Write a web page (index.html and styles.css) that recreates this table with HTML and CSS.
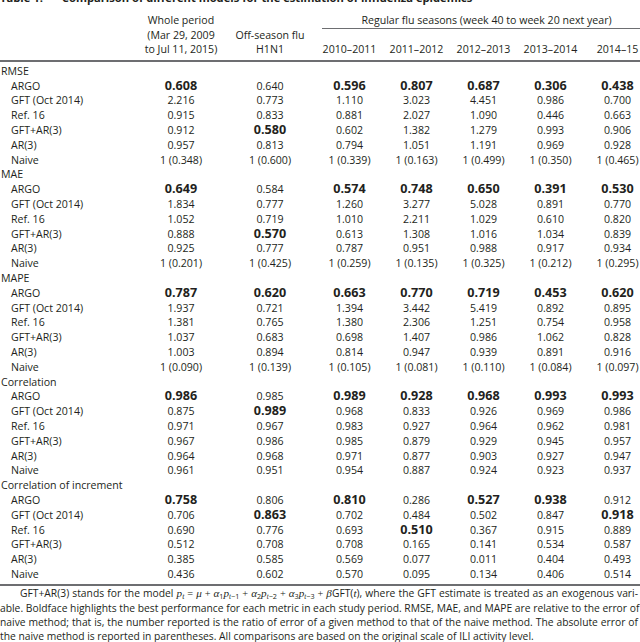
FILE: index.html
```html
<!DOCTYPE html>
<html lang="en">
<head>
<meta charset="utf-8">
<title>Table 1</title>
<link rel="stylesheet" href="styles.css">
</head>
<body>
<div class="page">
  <div class="caption"><span class="tnum">Table 1.</span>Comparison of different models for the estimation of influenza epidemics</div>
  <table class="data">
    <colgroup>
      <col class="c-label"><col class="c-whole"><col class="c-off">
      <col class="c-year"><col class="c-year"><col class="c-year"><col class="c-year"><col class="c-year">
    </colgroup>
    <thead>
      <tr class="h1">
        <th rowspan="2" class="hl"></th>
        <th rowspan="2" class="hv">Whole period<br>(Mar 29, 2009<br>to Jul 11, 2015)</th>
        <th rowspan="2" class="hv">Off-season flu<br>H1N1</th>
        <th colspan="5" class="span"><div class="span-in">Regular flu seasons (week 40 to week 20 next year)</div></th>
      </tr>
      <tr class="h2">
        <th>2010–2011</th><th>2011–2012</th><th>2012–2013</th><th>2013–2014</th><th>2014–15</th>
      </tr>
    </thead>
    <tbody>
      <tr class="grp first"><td colspan="8">RMSE</td></tr>
      <tr><td class="lab">ARGO</td><td><b>0.608</b></td><td>0.640</td><td><b>0.596</b></td><td><b>0.807</b></td><td><b>0.687</b></td><td><b>0.306</b></td><td><b>0.438</b></td></tr>
      <tr><td class="lab">GFT (Oct 2014)</td><td>2.216</td><td>0.773</td><td>1.110</td><td>3.023</td><td>4.451</td><td>0.986</td><td>0.700</td></tr>
      <tr><td class="lab">Ref. 16</td><td>0.915</td><td>0.833</td><td>0.881</td><td>2.027</td><td>1.090</td><td>0.446</td><td>0.663</td></tr>
      <tr><td class="lab">GFT+AR(3)</td><td>0.912</td><td><b>0.580</b></td><td>0.602</td><td>1.382</td><td>1.279</td><td>0.993</td><td>0.906</td></tr>
      <tr><td class="lab">AR(3)</td><td>0.957</td><td>0.813</td><td>0.794</td><td>1.051</td><td>1.191</td><td>0.969</td><td>0.928</td></tr>
      <tr><td class="lab">Naive</td><td>1 (0.348)</td><td>1 (0.600)</td><td>1 (0.339)</td><td>1 (0.163)</td><td>1 (0.499)</td><td>1 (0.350)</td><td>1 (0.465)</td></tr>

      <tr class="grp"><td colspan="8">MAE</td></tr>
      <tr><td class="lab">ARGO</td><td><b>0.649</b></td><td>0.584</td><td><b>0.574</b></td><td><b>0.748</b></td><td><b>0.650</b></td><td><b>0.391</b></td><td><b>0.530</b></td></tr>
      <tr><td class="lab">GFT (Oct 2014)</td><td>1.834</td><td>0.777</td><td>1.260</td><td>3.277</td><td>5.028</td><td>0.891</td><td>0.770</td></tr>
      <tr><td class="lab">Ref. 16</td><td>1.052</td><td>0.719</td><td>1.010</td><td>2.211</td><td>1.029</td><td>0.610</td><td>0.820</td></tr>
      <tr><td class="lab">GFT+AR(3)</td><td>0.888</td><td><b>0.570</b></td><td>0.613</td><td>1.308</td><td>1.016</td><td>1.034</td><td>0.839</td></tr>
      <tr><td class="lab">AR(3)</td><td>0.925</td><td>0.777</td><td>0.787</td><td>0.951</td><td>0.988</td><td>0.917</td><td>0.934</td></tr>
      <tr><td class="lab">Naive</td><td>1 (0.201)</td><td>1 (0.425)</td><td>1 (0.259)</td><td>1 (0.135)</td><td>1 (0.325)</td><td>1 (0.212)</td><td>1 (0.295)</td></tr>

      <tr class="grp"><td colspan="8">MAPE</td></tr>
      <tr><td class="lab">ARGO</td><td><b>0.787</b></td><td><b>0.620</b></td><td><b>0.663</b></td><td><b>0.770</b></td><td><b>0.719</b></td><td><b>0.453</b></td><td><b>0.620</b></td></tr>
      <tr><td class="lab">GFT (Oct 2014)</td><td>1.937</td><td>0.721</td><td>1.394</td><td>3.442</td><td>5.419</td><td>0.892</td><td>0.895</td></tr>
      <tr><td class="lab">Ref. 16</td><td>1.381</td><td>0.765</td><td>1.380</td><td>2.306</td><td>1.251</td><td>0.754</td><td>0.958</td></tr>
      <tr><td class="lab">GFT+AR(3)</td><td>1.037</td><td>0.683</td><td>0.698</td><td>1.407</td><td>0.986</td><td>1.062</td><td>0.828</td></tr>
      <tr><td class="lab">AR(3)</td><td>1.003</td><td>0.894</td><td>0.814</td><td>0.947</td><td>0.939</td><td>0.891</td><td>0.916</td></tr>
      <tr><td class="lab">Naive</td><td>1 (0.090)</td><td>1 (0.139)</td><td>1 (0.105)</td><td>1 (0.081)</td><td>1 (0.110)</td><td>1 (0.084)</td><td>1 (0.097)</td></tr>

      <tr class="grp"><td colspan="8">Correlation</td></tr>
      <tr><td class="lab">ARGO</td><td><b>0.986</b></td><td>0.985</td><td><b>0.989</b></td><td><b>0.928</b></td><td><b>0.968</b></td><td><b>0.993</b></td><td><b>0.993</b></td></tr>
      <tr><td class="lab">GFT (Oct 2014)</td><td>0.875</td><td><b>0.989</b></td><td>0.968</td><td>0.833</td><td>0.926</td><td>0.969</td><td>0.986</td></tr>
      <tr><td class="lab">Ref. 16</td><td>0.971</td><td>0.967</td><td>0.983</td><td>0.927</td><td>0.964</td><td>0.962</td><td>0.981</td></tr>
      <tr><td class="lab">GFT+AR(3)</td><td>0.967</td><td>0.986</td><td>0.985</td><td>0.879</td><td>0.929</td><td>0.945</td><td>0.957</td></tr>
      <tr><td class="lab">AR(3)</td><td>0.964</td><td>0.968</td><td>0.971</td><td>0.877</td><td>0.903</td><td>0.927</td><td>0.947</td></tr>
      <tr><td class="lab">Naive</td><td>0.961</td><td>0.951</td><td>0.954</td><td>0.887</td><td>0.924</td><td>0.923</td><td>0.937</td></tr>

      <tr class="grp"><td colspan="8">Correlation of increment</td></tr>
      <tr><td class="lab">ARGO</td><td><b>0.758</b></td><td>0.806</td><td><b>0.810</b></td><td>0.286</td><td><b>0.527</b></td><td><b>0.938</b></td><td>0.912</td></tr>
      <tr><td class="lab">GFT (Oct 2014)</td><td>0.706</td><td><b>0.863</b></td><td>0.702</td><td>0.484</td><td>0.502</td><td>0.847</td><td><b>0.918</b></td></tr>
      <tr><td class="lab">Ref. 16</td><td>0.690</td><td>0.776</td><td>0.693</td><td><b>0.510</b></td><td>0.367</td><td>0.915</td><td>0.889</td></tr>
      <tr><td class="lab">GFT+AR(3)</td><td>0.512</td><td>0.708</td><td>0.708</td><td>0.165</td><td>0.141</td><td>0.534</td><td>0.587</td></tr>
      <tr><td class="lab">AR(3)</td><td>0.385</td><td>0.585</td><td>0.569</td><td>0.077</td><td>0.011</td><td>0.404</td><td>0.493</td></tr>
      <tr class="last"><td class="lab">Naive</td><td>0.436</td><td>0.602</td><td>0.570</td><td>0.095</td><td>0.134</td><td>0.406</td><td>0.514</td></tr>
    </tbody>
  </table>
  <div class="note">
    <span class="ln indent">GFT+AR(3) stands for the model <i class="m">p<sub>t</sub></i><span class="op">=</span><i class="m">μ</i><span class="op">+</span><i class="m">α</i><sub>1</sub><i class="m">p</i><sub><i class="m">t</i>−1</sub><span class="op">+</span><i class="m">α</i><sub>2</sub><i class="m">p</i><sub><i class="m">t</i>−2</sub><span class="op">+</span><i class="m">α</i><sub>3</sub><i class="m">p</i><sub><i class="m">t</i>−3</sub><span class="op">+</span><i class="m">β</i>GFT(<i class="m">t</i>), where the GFT estimate is treated as an exogenous vari-</span>
    <span class="ln">able. Boldface highlights the best performance for each metric in each study period. RMSE, MAE, and MAPE are relative to the error of</span>
    <span class="ln">naive method; that is, the number reported is the ratio of error of a given method to that of the naive method. The absolute error of</span>
    <span class="ln end">the naive method is reported in parentheses. All comparisons are based on the original scale of ILI activity level.</span>
  </div>
</div>
</body>
</html>
```

FILE: styles.css
```css
html, body {
  margin: 0;
  padding: 0;
  background: #ffffff;
}

body {
  font-family: "Open Sans", "Noto Sans", "DejaVu Sans", sans-serif;
  color: #231f20;
}

.page {
  width: 640px;
  overflow: hidden;
  margin-top: -9px;
}

.caption {
  font-size: 11.2px;
  font-weight: 700;
  line-height: 14px;
  margin-bottom: 8px;
  white-space: nowrap;
}

.caption .tnum {
  margin-right: 19px;
}

.data {
  border-collapse: collapse;
  table-layout: fixed;
  width: 651px;
  font-size: 10.6px;
}

.c-label { width: 138px; }
.c-whole { width: 86px; }
.c-off { width: 92px; }
.c-year { width: 67px; }

.data th {
  font-weight: 400;
  text-align: center;
  padding: 0;
  line-height: 14.5px;
  white-space: nowrap;
}

.data th.hv {
  vertical-align: bottom;
  padding-bottom: 3px;
}

.data th.span {
  padding: 0 0 7px 6px;
}

.span-in {
  border-bottom: 1px solid #6d6e71;
}

.data .h2 th {
  padding-top: 6.5px;
  padding-bottom: 3px;
}

.data thead {
  border-bottom: 2px solid #6d6e71;
}

.data tbody {
  border-bottom: 2px solid #6d6e71;
}

.data td {
  padding: 0;
  line-height: 14.8px;
  height: 14.8px;
  text-align: center;
  white-space: nowrap;
}

.data td b {
  font-size: 12.6px;
  font-weight: 700;
  line-height: 1px;
}

.data tr.grp td {
  text-align: left;
  padding-left: 1px;
}

.data tr.first td {
  padding-top: 2.4px;
}

.data tr.last td {
  padding-bottom: 2px;
}

.data td.lab {
  text-align: left;
  padding-left: 11px;
}

.note {
  width: 638px;
  font-size: 10.3px;
  line-height: 14px;
  margin-top: 0.5px;
}

.note .ln {
  display: block;
  white-space: nowrap;
  text-align: justify;
  text-align-last: justify;
}

.note .ln.end {
  text-align-last: left;
}

.note .indent {
  text-indent: 20px;
}

.note .m {
  font-family: "Liberation Serif", "DejaVu Serif", serif;
  font-style: italic;
  font-size: 1.08em;
}

.note .op {
  font-family: "Liberation Serif", "DejaVu Serif", serif;
  padding: 0 3px;
}

.note sub {
  font-size: 0.7em;
  line-height: 0;
  vertical-align: -0.25em;
}

.note sub .m {
  font-size: 1em;
}
```
